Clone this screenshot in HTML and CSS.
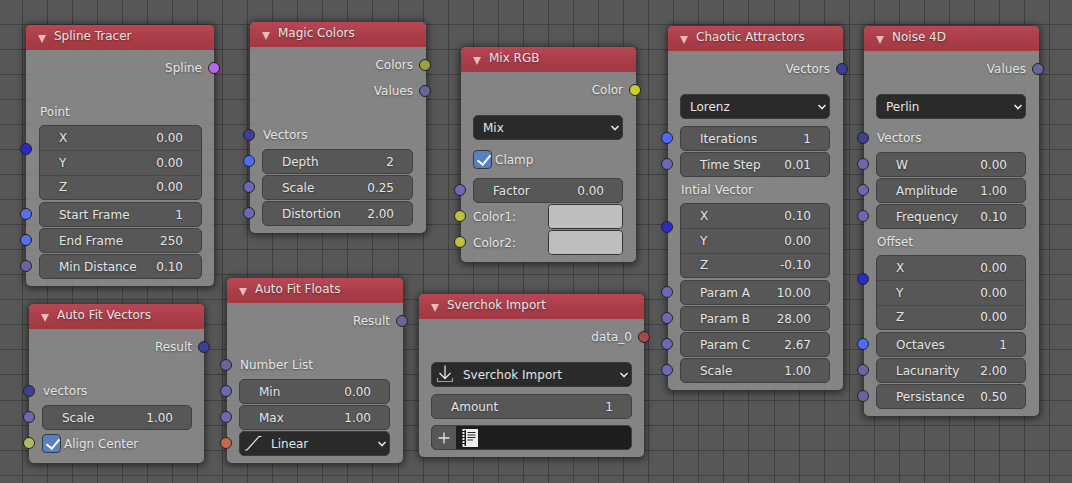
FILE: index.html
```html
<!DOCTYPE html>
<html lang="en">
<head>
<meta charset="utf-8">
<title>Node Editor</title>
<link rel="stylesheet" href="styles.css">
</head>
<body>
<svg class="defs" aria-hidden="true">
  <symbol id="tri" viewBox="0 0 8 8"><path d="M0 0H8L4 8Z" fill="currentColor"/></symbol>
  <symbol id="chev" viewBox="0 0 10 6"><path d="M1.500 1L5 4.500L8.500 1" fill="none" stroke="currentColor" stroke-width="1.600"/></symbol>
</svg>
<main class="canvas">

<section class="node spline">
  <header class="head"><button class="fold" type="button" aria-label="Collapse"><svg><use href="#tri"/></svg></button><h2>Spline Tracer</h2></header>
  <div class="body">
    <div class="row out"><span>Spline</span><i class="socket pink"></i></div>
    <div class="row text space">Point</div>
    <div class="row vector"><i class="socket deep"></i><div class="stack">
      <label class="cell"><span>X</span><input type="text" value="0.00"></label>
      <label class="cell"><span>Y</span><input type="text" value="0.00"></label>
      <label class="cell"><span>Z</span><input type="text" value="0.00"></label></div></div>
    <div class="row"><i class="socket int"></i><label class="field"><span>Start Frame</span><input type="text" value="1"></label></div>
    <div class="row"><i class="socket int"></i><label class="field"><span>End Frame</span><input type="text" value="250"></label></div>
    <div class="row"><i class="socket dim"></i><label class="field"><span>Min Distance</span><input type="text" value="0.10"></label></div>
  </div>
</section>

<section class="node magic">
  <header class="head"><button class="fold" type="button" aria-label="Collapse"><svg><use href="#tri"/></svg></button><h2>Magic Colors</h2></header>
  <div class="body">
    <div class="row out"><span>Colors</span><i class="socket olive"></i></div>
    <div class="row out"><span>Values</span><i class="socket gray"></i></div>
    <div class="row text space"><i class="socket navy"></i>Vectors</div>
    <div class="row"><i class="socket bright"></i><label class="field"><span>Depth</span><input type="text" value="2"></label></div>
    <div class="row"><i class="socket float"></i><label class="field"><span>Scale</span><input type="text" value="0.25"></label></div>
    <div class="row"><i class="socket float"></i><label class="field"><span>Distortion</span><input type="text" value="2.00"></label></div>
  </div>
</section>

<section class="node mix">
  <header class="head"><button class="fold" type="button" aria-label="Collapse"><svg><use href="#tri"/></svg></button><h2>Mix RGB</h2></header>
  <div class="body">
    <div class="row out"><span>Color</span><i class="socket yellow"></i></div>
    <div class="row menu"><select class="pick" aria-label="Blend mode"><option>Mix</option></select><svg class="chev"><use href="#chev"/></svg></div>
    <div class="row after"><label class="check"><input type="checkbox" checked><span>Clamp</span></label></div>
    <div class="row near"><i class="socket float"></i><label class="field"><span>Factor</span><input type="text" value="0.00"></label></div>
    <div class="row"><i class="socket lime"></i><label class="color"><span>Color1:</span><input type="color" value="#bebebe"></label></div>
    <div class="row"><i class="socket lime"></i><label class="color"><span>Color2:</span><input type="color" value="#bebebe"></label></div>
  </div>
</section>

<section class="node chaotic">
  <header class="head"><button class="fold" type="button" aria-label="Collapse"><svg><use href="#tri"/></svg></button><h2>Chaotic Attractors</h2></header>
  <div class="body">
    <div class="row out"><span>Vectors</span><i class="socket navy"></i></div>
    <div class="row menu"><select class="pick" aria-label="Attractor"><option>Lorenz</option></select><svg class="chev"><use href="#chev"/></svg></div>
    <div class="row after"><i class="socket bright"></i><label class="field"><span>Iterations</span><input type="text" value="1"></label></div>
    <div class="row"><i class="socket float"></i><label class="field"><span>Time Step</span><input type="text" value="0.01"></label></div>
    <div class="row text">Intial Vector</div>
    <div class="row vector"><i class="socket deep"></i><div class="stack">
      <label class="cell"><span>X</span><input type="text" value="0.10"></label>
      <label class="cell"><span>Y</span><input type="text" value="0.00"></label>
      <label class="cell"><span>Z</span><input type="text" value="-0.10"></label></div></div>
    <div class="row"><i class="socket float"></i><label class="field"><span>Param A</span><input type="text" value="10.00"></label></div>
    <div class="row"><i class="socket float"></i><label class="field"><span>Param B</span><input type="text" value="28.00"></label></div>
    <div class="row"><i class="socket float"></i><label class="field"><span>Param C</span><input type="text" value="2.67"></label></div>
    <div class="row"><i class="socket float"></i><label class="field"><span>Scale</span><input type="text" value="1.00"></label></div>
  </div>
</section>

<section class="node noise">
  <header class="head"><button class="fold" type="button" aria-label="Collapse"><svg><use href="#tri"/></svg></button><h2>Noise 4D</h2></header>
  <div class="body">
    <div class="row out"><span>Values</span><i class="socket gray"></i></div>
    <div class="row menu"><select class="pick" aria-label="Noise type"><option>Perlin</option></select><svg class="chev"><use href="#chev"/></svg></div>
    <div class="row text after"><i class="socket navy"></i>Vectors</div>
    <div class="row"><i class="socket float"></i><label class="field"><span>W</span><input type="text" value="0.00"></label></div>
    <div class="row"><i class="socket float"></i><label class="field"><span>Amplitude</span><input type="text" value="1.00"></label></div>
    <div class="row"><i class="socket float"></i><label class="field"><span>Frequency</span><input type="text" value="0.10"></label></div>
    <div class="row text">Offset</div>
    <div class="row vector"><i class="socket deep"></i><div class="stack">
      <label class="cell"><span>X</span><input type="text" value="0.00"></label>
      <label class="cell"><span>Y</span><input type="text" value="0.00"></label>
      <label class="cell"><span>Z</span><input type="text" value="0.00"></label></div></div>
    <div class="row"><i class="socket bright"></i><label class="field"><span>Octaves</span><input type="text" value="1"></label></div>
    <div class="row"><i class="socket dim"></i><label class="field"><span>Lacunarity</span><input type="text" value="2.00"></label></div>
    <div class="row"><i class="socket dim"></i><label class="field"><span>Persistance</span><input type="text" value="0.50"></label></div>
  </div>
</section>

<section class="node fit-vectors">
  <header class="head"><button class="fold" type="button" aria-label="Collapse"><svg><use href="#tri"/></svg></button><h2>Auto Fit Vectors</h2></header>
  <div class="body">
    <div class="row out"><span>Result</span><i class="socket navy"></i></div>
    <div class="row text space"><i class="socket navy"></i>vectors</div>
    <div class="row"><i class="socket float"></i><label class="field"><span>Scale</span><input type="text" value="1.00"></label></div>
    <div class="row"><i class="socket sage"></i><label class="check"><input type="checkbox" checked><span>Align Center</span></label></div>
  </div>
</section>

<section class="node fit-floats">
  <header class="head"><button class="fold" type="button" aria-label="Collapse"><svg><use href="#tri"/></svg></button><h2>Auto Fit Floats</h2></header>
  <div class="body">
    <div class="row out"><span>Result</span><i class="socket gray"></i></div>
    <div class="row text space"><i class="socket gray"></i>Number List</div>
    <div class="row"><i class="socket float"></i><label class="field"><span>Min</span><input type="text" value="0.00"></label></div>
    <div class="row"><i class="socket float"></i><label class="field"><span>Max</span><input type="text" value="1.00"></label></div>
    <div class="row"><i class="socket orange"></i><select class="pick with-icon" aria-label="Interpolation"><option>Linear</option></select>
      <svg class="pick-icon" viewBox="0 0 18 18"><path d="M1 16H3L15 2.500H17.500" fill="none" stroke="currentColor" stroke-width="1.200"/></svg><svg class="chev"><use href="#chev"/></svg></div>
  </div>
</section>

<section class="node sverchok">
  <header class="head"><button class="fold" type="button" aria-label="Collapse"><svg><use href="#tri"/></svg></button><h2>Sverchok Import</h2></header>
  <div class="body">
    <div class="row out"><span>data_0</span><i class="socket red"></i></div>
    <div class="row menu"><select class="pick with-icon" aria-label="Importer"><option>Sverchok Import</option></select>
      <svg class="pick-icon" viewBox="0 0 18 18"><path d="M9 0.500V13.500M3.500 8L9 13.500L14.500 8" fill="none" stroke="currentColor" stroke-width="1.300"/><path d="M1.500 13V16.500H16.500V13" fill="none" stroke="#a0a0a0" stroke-width="1.200"/></svg><svg class="chev"><use href="#chev"/></svg></div>
    <div class="row after"><label class="field"><span>Amount</span><input type="text" value="1"></label></div>
    <div class="row near"><div class="file">
      <button class="add" type="button" aria-label="Add text"><svg viewBox="0 0 12 12"><path d="M6 0.500V11.500M0.500 6H11.500" stroke="currentColor" stroke-width="1.300"/></svg></button>
      <svg class="doc" viewBox="0 0 16 18"><path d="M4 0H16V18H4Z" fill="#eee"/><path d="M0.500 0.500H4M0.500 17.500H4" stroke="#eee" fill="none"/><path d="M1.500 0V18" stroke="#eee" stroke-width="2" stroke-dasharray="2 1"/><path d="M5.500 3.500H13.500M5.500 6H13.500M5.500 8.500H13.500M5.500 11H11" stroke="#222" stroke-width="1.100"/></svg>
      <input type="text" aria-label="Text block"></div></div>
  </div>
</section>

</main>
</body>
</html>
```

FILE: styles.css
```css
* { box-sizing: border-box; }

body {
  margin: 0;
  font: 12px/16px "DejaVu Sans", sans-serif;
  color: #e4e4e4;
  background: #575757;
}

.defs { position: absolute; width: 0; height: 0; }

.canvas {
  position: relative;
  min-height: 100vh;
  overflow: hidden;
  background-color: #575757;
  background-image:
    repeating-linear-gradient(to right, transparent 0 24px, #404040 24px 25px),
    repeating-linear-gradient(to bottom, transparent 0 24px, #404040 24px 25px);
  background-size: 376px 376px;
  background-position: -2px 0, 0 0;
}

.node {
  position: absolute;
  width: 175px;
  border-radius: 5px;
  background: rgba(136, 136, 136, 0.93);
  box-shadow: 0 1px 7px 2px rgba(0, 0, 0, 0.5);
  text-shadow: 0 1px 2px rgba(0, 0, 0, 0.4);
}

.spline { left: 26px; top: 25px; width: 188px; }
.magic { left: 250px; top: 22px; width: 176px; }
.mix { left: 461px; top: 47px; }
.chaotic { left: 668px; top: 26px; }
.noise { left: 864px; top: 26px; }
.fit-vectors { left: 29px; top: 304px; }
.fit-floats { left: 227px; top: 278px; width: 176px; }
.sverchok { left: 419px; top: 294px; width: 225px; }

.head {
  display: flex;
  align-items: center;
  gap: 8px;
  height: 25px;
  padding: 0 12px 3px;
  border-radius: 5px 5px 0 0;
  background: linear-gradient(#b84754, #a83c47 60%, #a33944);
}

.head h2 { margin: 0; font: inherit; white-space: nowrap; }

.fold {
  width: 8px;
  height: 8px;
  margin-top: 6px;
  padding: 0;
  border: 0;
  background: none;
  color: #e8b9bd;
}

.fold svg { display: block; width: 8px; height: 8px; }

.body { padding: 5px 13px 7px 12px; }
.spline .body, .fit-vectors .body { padding-left: 13px; padding-right: 12px; }
.sverchok .body { padding-right: 12px; }

.row {
  position: relative;
  display: flex;
  height: 26px;
  padding-top: 1px;
}

.out, .text { align-items: center; padding: 0 1px; }
.out { justify-content: flex-end; padding: 0; }
.space { margin-top: 18px; }
.menu { margin-top: 11px; }
.after { margin-top: 6px; }
.near { margin-top: 5px; }
.vector { height: 76px; padding: 0 0 1px; }

.socket {
  position: absolute;
  left: -19px;
  top: 7px;
  width: 12px;
  height: 12px;
  border: 1px solid #222;
  border-radius: 50%;
}

.vector .socket { top: 18px; }
.out .socket { left: auto; right: -18px; }

.pink { background: #b968e8; }
.deep { background: #2b2bc4; }
.int { background: #5a6fe8; }
.bright { background: #4c6bff; }
.float { background: #6c68b4; }
.dim { background: #6b64a2; }
.gray { background: #66669a; }
.navy { background: #3f3d94; }
.olive { background: #9c9f3e; }
.yellow { background: #cccc32; }
.lime { background: #bcc13e; }
.sage { background: #b0bb68; }
.orange { background: #c46a48; }
.red { background: #a44a4c; }

.field, .stack, .file, .pick {
  flex: 1;
  min-width: 0;
  border: 1px solid #404040;
  border-radius: 5px;
  background: #575757;
}

.field, .cell {
  display: flex;
  align-items: center;
  padding: 0 18px 0 19px;
}

.stack { display: grid; grid-template-rows: repeat(3, 1fr); }
.cell + .cell { border-top: 1px solid #484848; }

input[type="text"] {
  flex: 1;
  width: 0;
  min-width: 0;
  padding: 0;
  border: 0;
  outline: 0;
  background: none;
  color: inherit;
  font: inherit;
  text-align: right;
  text-shadow: inherit;
}

.pick {
  appearance: none;
  padding: 0 20px 0 9px;
  border-color: #3a3a3a;
  background: #2a2a2a;
  color: inherit;
  font: inherit;
}

.with-icon { padding-left: 31px; }

.pick-icon {
  position: absolute;
  left: 5px;
  top: 4px;
  width: 18px;
  height: 18px;
}

.chev {
  position: absolute;
  right: 3px;
  top: 11px;
  width: 10px;
  height: 6px;
}

.check, .color { display: flex; flex: 1; align-items: center; gap: 3px; }

.check input {
  appearance: none;
  width: 19px;
  height: 19px;
  margin: 0;
  border: 1px solid #3a3a3a;
  border-radius: 4px;
  background: #5680c2;
}

.check input:checked::before {
  content: "";
  display: block;
  width: 6px;
  height: 11px;
  margin: 1px 0 0 6px;
  border: solid #fff;
  border-width: 0 2px 2px 0;
  rotate: 40deg;
}

.color { justify-content: space-between; }

.color input {
  appearance: none;
  width: 50%;
  height: 25px;
  padding: 0;
  border: 1px solid #333;
  border-radius: 4px;
  background: #bebebe;
}

.color input::-webkit-color-swatch-wrapper { padding: 0; }
.color input::-webkit-color-swatch { border: 0; border-radius: 3px; }

.file {
  display: flex;
  align-items: stretch;
  overflow: hidden;
  background: #1d1d1d;
}

.add {
  display: grid;
  place-items: center;
  width: 24px;
  padding: 0;
  border: 0;
  background: #575757;
  color: inherit;
}

.add svg { width: 12px; height: 12px; }
.doc { align-self: center; width: 16px; height: 18px; margin: 0 6px; }
```
